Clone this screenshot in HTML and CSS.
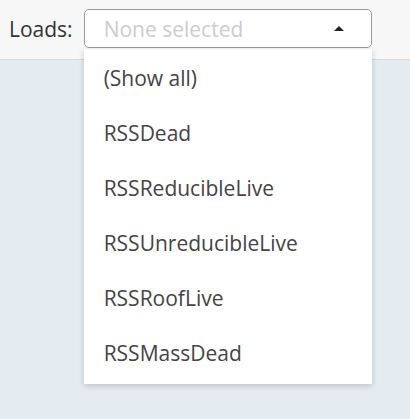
FILE: index.html
```html
<!DOCTYPE html>
<html lang="en">
<head>
    <meta charset="UTF-8">
    <meta name="viewport" content="width=device-width, initial-scale=1.0">
    <title>Loads</title>
    <link rel="stylesheet" href="styles.css">
</head>
<body>
    <div class="toolbar">
        <label class="field-label">Loads:</label>
        <div class="select">
            <div class="select-box">
                <span class="placeholder">None selected</span>
                <span class="caret"></span>
            </div>
            <ul class="select-menu">
                <li>(Show all)</li>
                <li>RSSDead</li>
                <li>RSSReducibleLive</li>
                <li>RSSUnreducibleLive</li>
                <li>RSSRoofLive</li>
                <li>RSSMassDead</li>
            </ul>
        </div>
    </div>
    <div class="content"></div>
</body>
</html>
```

FILE: styles.css
```css
/* CSS */
html, body {
    margin: 0;
    height: 100%;
}

body {
    font-family: "Open Sans", "Liberation Sans", sans-serif;
    background: #e5ecf1;
    color: #333;
}

.toolbar {
    display: flex;
    align-items: center;
    height: 60px;
    padding-left: 9px;
    background: #f7f7f8;
    border-bottom: 1px solid #d6d9dc;
    box-sizing: border-box;
}

.field-label {
    font-size: 21px;
    color: #333;
    margin-right: 11px;
    margin-top: -2px;
}

.select {
    position: relative;
    width: 288px;
}

.select-box {
    display: flex;
    align-items: center;
    justify-content: space-between;
    height: 39px;
    margin-top: -2px;
    padding: 0 27px 0 19px;
    border: 1px solid #999;
    border-radius: 5px;
    background: #fff;
    box-sizing: border-box;
}

.placeholder {
    font-size: 21px;
    color: #ccc;
}

.caret {
    width: 0;
    height: 0;
    border-left: 5px solid transparent;
    border-right: 5px solid transparent;
    border-bottom: 5px solid #222;
}

.select-menu {
    position: absolute;
    top: 38px;
    left: 0;
    right: 0;
    margin: 0;
    padding: 2px 0 3px;
    list-style: none;
    background: #fff;
    box-shadow: 0 2px 6px rgba(0, 0, 0, 0.18);
}

.select-menu li {
    height: 55px;
    line-height: 55px;
    padding-left: 20px;
    font-size: 21px;
    color: #444;
}
```
